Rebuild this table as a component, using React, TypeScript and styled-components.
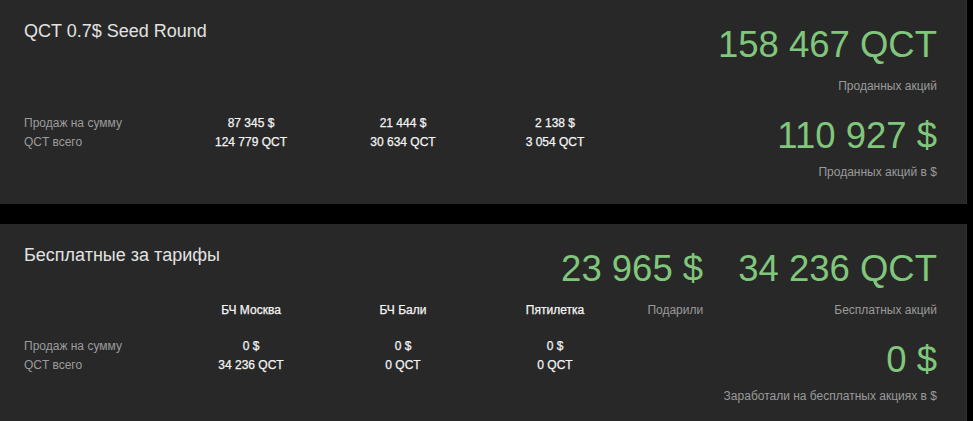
import React from "react";
import styled, { createGlobalStyle } from "styled-components";

const GlobalStyle = createGlobalStyle`
  html, body {
    margin: 0;
    padding: 0;
    background: #000;
    font-family: "Liberation Sans", Arial, sans-serif;
  }
`;

const Page = styled.div`
  display: flex;
  flex-direction: column;
  gap: 20px;
  width: 973px;
`;

const Card = styled.section<{ $height: number }>`
  display: flex;
  height: ${(p) => p.$height}px;
  box-sizing: border-box;
  padding: 0 29px 0 24px;
  background: #282828;
  border-right: 1px solid #303030;
  margin-right: 6px;
`;

const LeftCol = styled.div`
  flex: 1;
  min-width: 0;
  display: flex;
  flex-direction: column;
`;

const Title = styled.h2`
  margin: 21px 0 0;
  font-size: 18px;
  line-height: 21px;
  font-weight: normal;
  color: #e2e2e2;
`;

const Table = styled.div<{ $top: number }>`
  display: grid;
  grid-template-columns: 151px repeat(3, 152px);
  margin-top: ${(p) => p.$top}px;
  font-size: 12px;
  line-height: 19px;
`;

const RowLabel = styled.div`
  color: #9c9c9c;
`;

const Cell = styled.div<{ $gap?: number }>`
  text-align: center;
  color: #f4f4f4;
  margin-bottom: ${(p) => p.$gap ?? 0}px;
  -webkit-text-stroke: 0.25px #f4f4f4;
`;

const RightCol = styled.div`
  flex-shrink: 0;
  display: flex;
  flex-direction: column;
  align-items: flex-end;
  padding-top: 25px;
`;

const StatRow = styled.div`
  display: flex;
  gap: 35px;
`;

const Stat = styled.div<{ $labelGap: number; $top?: number }>`
  display: flex;
  flex-direction: column;
  align-items: flex-end;
  margin-top: ${(p) => p.$top ?? 0}px;

  & > span:last-child {
    margin-top: ${(p) => p.$labelGap}px;
  }
`;

const Big = styled.span`
  font-size: 36.5px;
  line-height: 40px;
  color: #80c77b;
  white-space: nowrap;
`;

const Caption = styled.span`
  font-size: 12px;
  line-height: 16px;
  color: #9a9a9a;
  white-space: nowrap;
`;

export default function App() {
  return (
    <>
      <GlobalStyle />
      <Page>
        <Card $height={204}>
          <LeftCol>
            <Title>QCT 0.7$ Seed Round</Title>
            <Table $top={72}>
              <RowLabel>Продаж на сумму</RowLabel>
              <Cell>87 345 $</Cell>
              <Cell>21 444 $</Cell>
              <Cell>2 138 $</Cell>
              <RowLabel>QCT всего</RowLabel>
              <Cell>124 779 QCT</Cell>
              <Cell>30 634 QCT</Cell>
              <Cell>3 054 QCT</Cell>
            </Table>
          </LeftCol>
          <RightCol>
            <Stat $labelGap={13}>
              <Big>158 467 QCT</Big>
              <Caption>Проданных акций</Caption>
            </Stat>
            <Stat $labelGap={8} $top={22}>
              <Big>110 927 $</Big>
              <Caption>Проданных акций в $</Caption>
            </Stat>
          </RightCol>
        </Card>
        <Card $height={210}>
          <LeftCol>
            <Title>Бесплатные за тарифы</Title>
            <Table $top={35}>
              <RowLabel />
              <Cell $gap={17}>БЧ Москва</Cell>
              <Cell $gap={17}>БЧ Бали</Cell>
              <Cell $gap={17}>Пятилетка</Cell>
              <RowLabel>Продаж на сумму</RowLabel>
              <Cell>0 $</Cell>
              <Cell>0 $</Cell>
              <Cell>0 $</Cell>
              <RowLabel>QCT всего</RowLabel>
              <Cell>34 236 QCT</Cell>
              <Cell>0 QCT</Cell>
              <Cell>0 QCT</Cell>
            </Table>
          </LeftCol>
          <RightCol>
            <StatRow>
              <Stat $labelGap={13}>
                <Big>23 965 $</Big>
                <Caption>Подарили</Caption>
              </Stat>
              <Stat $labelGap={13}>
                <Big>34 236 QCT</Big>
                <Caption>Бесплатных акций</Caption>
              </Stat>
            </StatRow>
            <Stat $labelGap={8} $top={22}>
              <Big>0 $</Big>
              <Caption>Заработали на бесплатных акциях в $</Caption>
            </Stat>
          </RightCol>
        </Card>
      </Page>
    </>
  );
}
